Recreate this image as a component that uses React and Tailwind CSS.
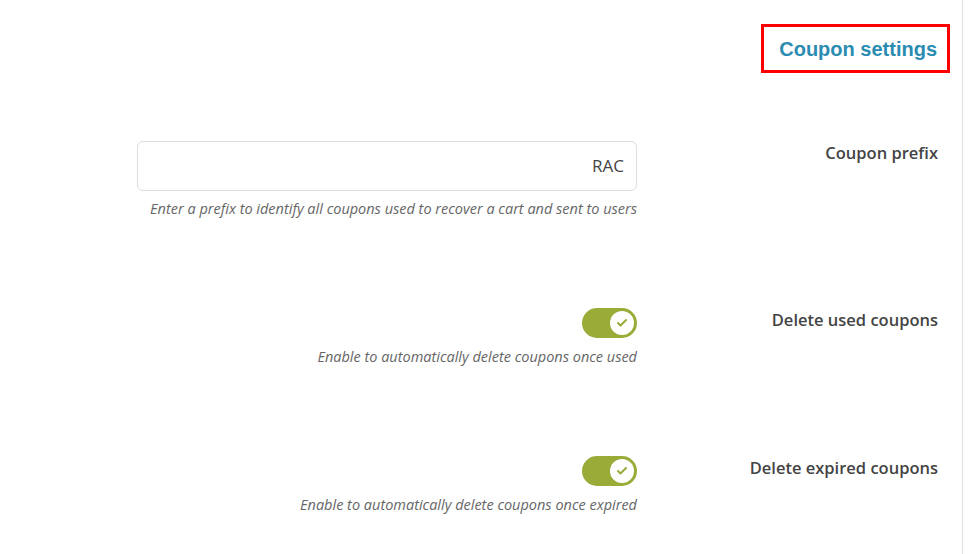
import { Check } from 'lucide-react'

const rows = [
  { label: 'Delete used coupons', hint: 'Enable to automatically delete coupons once used' },
  { label: 'Delete expired coupons', hint: 'Enable to automatically delete coupons once expired' },
]

function Toggle() {
  return (
    <div className="w-[55px] h-[30px] rounded-full bg-[#9aab37] flex items-center justify-end pr-[3px]">
      <div className="w-[24px] h-[24px] rounded-full bg-white flex items-center justify-center">
        <Check size={12} strokeWidth={4} className="text-[#9aab37]" />
      </div>
    </div>
  )
}

function Row({ label, hint, children, className = '', hintGap = 'mt-2' }) {
  return (
    <div className={`flex justify-end ${className}`}>
      <div className="w-[500px] flex flex-col items-end">
        {children}
        <p className={`text-[14.5px] leading-[20px] italic text-[#666] ${hintGap}`}>{hint}</p>
      </div>
      <div className="w-[301px] text-right text-[16.5px] leading-[24px] font-semibold text-[#444]">{label}</div>
    </div>
  )
}

export default function App() {
  return (
    <div className="w-[968px] h-[554px] bg-white" style={{ fontFamily: '"Open Sans", "Noto Sans", sans-serif' }}>
      <div className="w-[963px] h-full border-r border-[#ddd] pr-[24px] pt-[24px]">
        <div className="flex justify-end -mr-[12px]">
          <div className="border-[3px] border-[#ff0000] pl-[15px] pr-[10px] h-[49px] flex items-center">
            <h2 className="text-[20px] font-bold text-[#2b8cb1]" style={{ fontFamily: '"Liberation Sans", Arial, sans-serif' }}>
              Coupon settings
            </h2>
          </div>
        </div>

        <Row className="mt-[68px]" label="Coupon prefix" hint="Enter a prefix to identify all coupons used to recover a cart and sent to users">
          <div className="w-[500px] h-[50px] rounded-[6px] border border-[#ddd] flex items-center justify-end px-[12px] text-[17px] text-[#444]">
            RAC
          </div>
        </Row>

        {rows.map((r) => (
          <Row key={r.label} className="mt-[89px]" hintGap="mt-[9px]" label={r.label} hint={r.hint}>
            <Toggle />
          </Row>
        ))}
      </div>
    </div>
  )
}
